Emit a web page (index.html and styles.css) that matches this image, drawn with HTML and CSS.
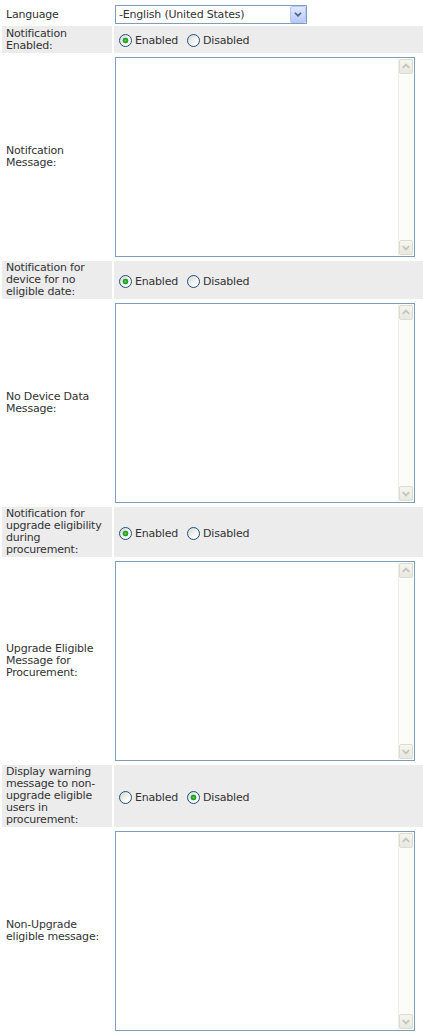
FILE: index.html
```html
<!DOCTYPE html>
<html lang="en">
<head>
    <meta charset="UTF-8">
    <meta name="viewport" content="width=device-width, initial-scale=1.0">
    <title>Notification Settings</title>
    <link rel="stylesheet" href="styles.css">
</head>
<body>

<div class="form">
    <div class="label first">Language</div>
    <div class="field top">
        <span class="combo">
            <select id="language">
                <option>-English (United States)</option>
            </select>
            <svg class="drop" width="16" height="17" viewBox="0 0 16 17">
                <path d="M4.5 6.5 L8 10 L11.5 6.5" fill="none" stroke="#4d6185" stroke-width="2"/>
            </svg>
        </span>
    </div>

    <div class="label shade">Notification Enabled:</div>
    <div class="field shade opts tall">
        <label class="opt"><input type="radio" name="notifyEnabled" checked>Enabled</label>
        <label class="opt"><input type="radio" name="notifyEnabled">Disabled</label>
    </div>

    <div class="label">Notifcation Message:</div>
    <div class="field">
        <div class="memo">
            <textarea id="notifyMessage"></textarea>
            <div class="vscroll">
                <span class="sbtn"><svg width="13" height="13" viewBox="0 0 13 13"><path d="M3 8 L6.5 4.5 L10 8" fill="none" stroke="#c6c6bd" stroke-width="2"/></svg></span>
                <span class="track"></span>
                <span class="sbtn"><svg width="13" height="13" viewBox="0 0 13 13"><path d="M3 5 L6.5 8.5 L10 5" fill="none" stroke="#c6c6bd" stroke-width="2"/></svg></span>
            </div>
        </div>
    </div>

    <div class="label shade">Notification for device for no eligible date:</div>
    <div class="field shade opts">
        <label class="opt"><input type="radio" name="noDevice" checked>Enabled</label>
        <label class="opt"><input type="radio" name="noDevice">Disabled</label>
    </div>

    <div class="label">No Device Data Message:</div>
    <div class="field">
        <div class="memo">
            <textarea id="noDeviceMessage"></textarea>
            <div class="vscroll">
                <span class="sbtn"><svg width="13" height="13" viewBox="0 0 13 13"><path d="M3 8 L6.5 4.5 L10 8" fill="none" stroke="#c6c6bd" stroke-width="2"/></svg></span>
                <span class="track"></span>
                <span class="sbtn"><svg width="13" height="13" viewBox="0 0 13 13"><path d="M3 5 L6.5 8.5 L10 5" fill="none" stroke="#c6c6bd" stroke-width="2"/></svg></span>
            </div>
        </div>
    </div>

    <div class="label shade">Notification for upgrade eligibility during procurement:</div>
    <div class="field shade opts">
        <label class="opt"><input type="radio" name="upgradeEligible" checked>Enabled</label>
        <label class="opt"><input type="radio" name="upgradeEligible">Disabled</label>
    </div>

    <div class="label">Upgrade Eligible Message for Procurement:</div>
    <div class="field">
        <div class="memo">
            <textarea id="upgradeMessage"></textarea>
            <div class="vscroll">
                <span class="sbtn"><svg width="13" height="13" viewBox="0 0 13 13"><path d="M3 8 L6.5 4.5 L10 8" fill="none" stroke="#c6c6bd" stroke-width="2"/></svg></span>
                <span class="track"></span>
                <span class="sbtn"><svg width="13" height="13" viewBox="0 0 13 13"><path d="M3 5 L6.5 8.5 L10 5" fill="none" stroke="#c6c6bd" stroke-width="2"/></svg></span>
            </div>
        </div>
    </div>

    <div class="label shade">Display warning message to non-upgrade eligible users in procurement:</div>
    <div class="field shade opts">
        <label class="opt"><input type="radio" name="nonUpgradeWarning">Enabled</label>
        <label class="opt"><input type="radio" name="nonUpgradeWarning" checked>Disabled</label>
    </div>

    <div class="label">Non-Upgrade eligible message:</div>
    <div class="field">
        <div class="memo">
            <textarea id="nonUpgradeMessage"></textarea>
            <div class="vscroll">
                <span class="sbtn"><svg width="13" height="13" viewBox="0 0 13 13"><path d="M3 8 L6.5 4.5 L10 8" fill="none" stroke="#c6c6bd" stroke-width="2"/></svg></span>
                <span class="track"></span>
                <span class="sbtn"><svg width="13" height="13" viewBox="0 0 13 13"><path d="M3 5 L6.5 8.5 L10 5" fill="none" stroke="#c6c6bd" stroke-width="2"/></svg></span>
            </div>
        </div>
    </div>
</div>

</body>
</html>
```

FILE: styles.css
```css
body {
    margin: 0;
    font-family: "DejaVu Sans", Verdana, sans-serif;
    font-size: 11px;
    letter-spacing: -0.2px;
    color: #333;
    background: #fff;
}
.form {
    display: grid;
    grid-template-columns: 110px 1fr;
    gap: 2px;
    padding: 2px 0 0 2px;
}
.label {
    display: flex;
    align-items: center;
    padding: 1px 2px 1px 4px;
    line-height: 12px;
}
.label.first {
    padding-top: 4px;
}
.field {
    display: flex;
    align-items: center;
}
.field.top {
    align-items: flex-start;
}
.shade {
    background-color: #ececec;
}
.opts {
    padding-top: 2px;
    box-sizing: border-box;
}
.opts.tall {
    min-height: 27px;
}
.opt {
    display: inline-flex;
    align-items: center;
    margin-right: 4px;
}
input[type="radio"] {
    appearance: none;
    -webkit-appearance: none;
    box-sizing: border-box;
    width: 13px;
    height: 13px;
    margin: 0 3px 0 5px;
    border: 1px solid #1c5180;
    border-radius: 50%;
    background: linear-gradient(135deg, #d6d6cf, #fff 75%);
}
input[type="radio"]:checked {
    background: radial-gradient(circle, #63d763 0, #21a121 1.8px, #2a9a2a 2.6px, transparent 3.2px),
                linear-gradient(135deg, #d6d6cf, #fff 75%);
}
.combo {
    position: relative;
    display: inline-block;
    margin: 3px 0 0 1px;
}
.combo select {
    appearance: none;
    -webkit-appearance: none;
    width: 192px;
    height: 19px;
    padding: 0 0 0 3px;
    border: 1px solid #7f9db9;
    border-radius: 0;
    background: #fff;
    color: #333;
    font: inherit;
    letter-spacing: inherit;
    outline: none;
}
.combo .drop {
    position: absolute;
    top: 1px;
    right: 1px;
    box-sizing: border-box;
    width: 16px;
    height: 17px;
    border: 1px solid #b5c8f2;
    border-radius: 2px;
    background: linear-gradient(#dfe8fe, #b6cbfb);
    pointer-events: none;
}
.memo {
    display: flex;
    box-sizing: border-box;
    width: 300px;
    height: 200px;
    margin: 2px 0 2px 1px;
    border: 1px solid #7f9db9;
    background: #fff;
}
.memo textarea {
    flex: 1;
    border: 0;
    padding: 2px;
    resize: none;
    outline: none;
    overflow: hidden;
    font: inherit;
}
.vscroll {
    display: flex;
    flex-direction: column;
    width: 16px;
    box-sizing: border-box;
    padding: 1px 1px 1px 0;
    background: #fcfcf8;
    border-left: 1px solid #eeeee6;
}
.sbtn {
    display: flex;
    align-items: center;
    justify-content: center;
    height: 15px;
    box-sizing: border-box;
    border: 1px solid #dcdcd2;
    border-radius: 2px;
    background: linear-gradient(#f6f6f0, #e8e8df);
}
.track {
    flex: 1;
}
```
